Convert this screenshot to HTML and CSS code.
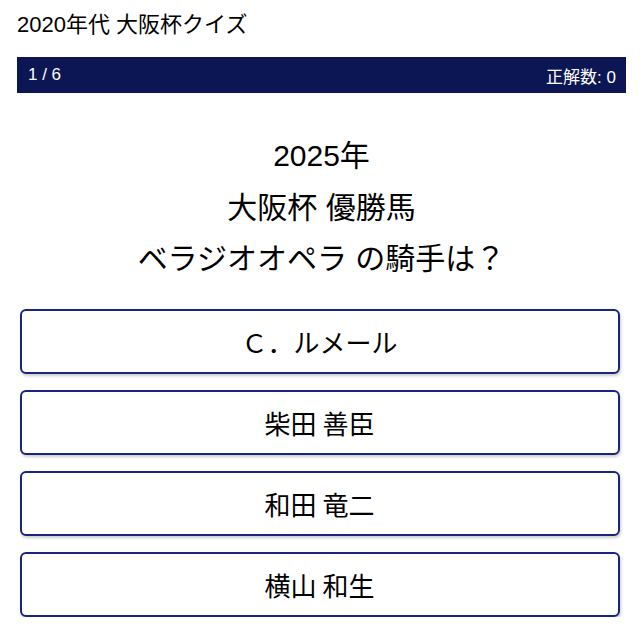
FILE: index.html
```html
<!DOCTYPE html>
<html lang="ja">
<head>
<meta charset="utf-8">
<title>2020年代 大阪杯クイズ</title>
<link rel="stylesheet" href="styles.css">
</head>
<body>
<div class="app">
  <h1 class="title">2020年代 大阪杯クイズ</h1>
  <div class="status">
    <span class="progress">1 / 6</span>
    <span class="score">正解数: 0</span>
  </div>
  <div class="question">
    <div>2025年</div>
    <div>大阪杯 優勝馬</div>
    <div>ベラジオオペラ の騎手は？</div>
  </div>
  <div class="choices">
    <button class="choice">Ｃ．ルメール</button>
    <button class="choice">柴田 善臣</button>
    <button class="choice">和田 竜二</button>
    <button class="choice">横山 和生</button>
  </div>
</div>
</body>
</html>
```
FILE: styles.css
```css
html, body {
  margin: 0;
  padding: 0;
  background: #ffffff;
}
body {
  font-family: "Liberation Sans", "Noto Sans CJK JP", sans-serif;
  color: #000;
}
.app {
  padding: 12px 14px 0 17px;
}
.title {
  margin: 0;
  font-size: 22px;
  font-weight: normal;
  line-height: 26px;
}
.status {
  margin-top: 19px;
  height: 36px;
  background: #0c1654;
  color: #ffffff;
  display: flex;
  align-items: center;
  justify-content: space-between;
  padding: 0 10px 0 11px;
  font-size: 17px;
}
.question {
  margin-top: 37px;
  text-align: center;
  font-size: 30px;
  line-height: 51.5px;
}
.choices {
  margin: 24px auto 0;
  width: 600px;
  display: flex;
  flex-direction: column;
  gap: 16px;
  position: relative;
  left: -2px;
}
.choice {
  height: 65px;
  border: 2px solid #1a237e;
  border-radius: 6px;
  background: #ffffff;
  box-shadow: 1px 2px 3px rgba(0, 0, 0, 0.2);
  font-family: "Noto Sans CJK JP", sans-serif;
  font-size: 26px;
  color: #000;
  padding: 0;
  cursor: pointer;
}
```
